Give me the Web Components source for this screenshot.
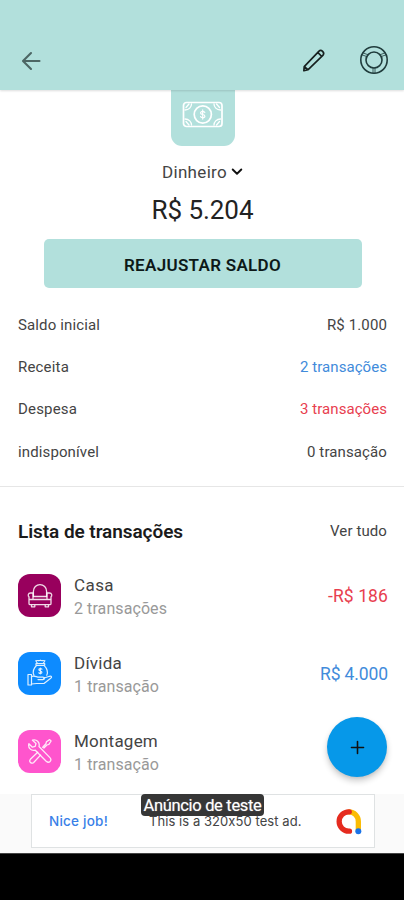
<!DOCTYPE html>
<html lang="pt-BR"><head><meta charset="utf-8"><title>Dinheiro</title>
<style>html,body{margin:0;background:#fff}body{width:404px;height:900px;overflow:hidden;font-family:Roboto,"Liberation Sans",sans-serif;color:#222}</style></head>
<body><account-screen></account-screen>
<script>
function define(name, html, setup) {
  customElements.define(name, class extends HTMLElement {
    connectedCallback() {
      if (this.shadowRoot) return;
      const t = document.createElement('template');
      t.innerHTML = html;
      this.attachShadow({mode:'open'}).append(t.content.cloneNode(true));
      if (setup) setup(this, this.shadowRoot);
    }
  });
}
const icons = {
  back:['0 0 24 24','<path d="M20.5 12H4.3M12 4 4 12l8 8" stroke-width="2.1"/>'],
  pencil:['0 0 26 26','<path d="M2.4 20.2 18.2 3.6c2.6-2.6 7 1.4 4.4 4.4L6.4 23.6 2 24.6zM17 4.8l4.5 4.4M3 20.4l3.2 3" stroke-width="1.8"/>'],
  wheel:['0 0 30 30','<g stroke-width="1.6"><circle cx="15" cy="15" r="13.2"/><circle cx="15" cy="15" r="8"/><path d="M14 23v5M16 23v5M2.9 9.8l5.3 1.9M4.1 7.9l5.2 2M27.1 9.8l-5.3 1.9M25.9 7.9l-5.2 2" stroke-width=".8"/></g>'],
  money:['0 0 42 28','<g stroke-width="1.7"><rect x="1.5" y="1.5" width="38.5" height="24" rx="3"/><circle cx="20.8" cy="13.5" r="8.6"/><path d="M3 9c4 0 6.5-3 6.5-6M3 18c4 0 6.5 3 6.5 6M38.5 9C34.5 9 32 6 32 3M38.5 18C34.5 18 32 21 32 24M4 6.5 7 3M4 20.5 7 24M37.5 6.5l-3-3.5M37.5 20.5l-3 3.5" stroke-width="1.3"/><path d="M22.8 11.5c-.6-.8-1.2-1.1-2.1-1.1-2.9 0-2.8 2.9 0 3.1 2.9.3 2.9 3.2 0 3.2-1 0-1.6-.4-2.1-1.1M20.7 8.9v9.2" stroke-width="1.2"/></g>'],
  sofa:['0 0 26 26','<g stroke-width="1.3"><path d="M6.4 14.5V9.2a6.6 6.6 0 0 1 13.2 0v5.3"/><path d="M6 14.5V11H3.6C.8 11 .8 14 2 14.8v6.7c0 .8.4 1.2 1.2 1.2h19.6c.8 0 1.2-.4 1.2-1.2v-6.7c1.2-.8 1.2-3.8-1.6-3.8H20v3.5zM6 14.5V17.5h14v-3M2 17.5h22M4.5 23v1.8h3.3V23M18.2 23v1.8h3.3V23"/></g>'],
  debt:['0 0 26 26','<g stroke-width="1.2"><path d="M10.5 3.5 8.8.8c2-.9 3 .4 4.6-.6 1.6 1 2.8-.3 4.5.6L16.2 3.5M9 3.5h8.7v1.8H9zM9.7 5.3c-3.6 3.5-4 7.5-2.7 10M17 5.3c3.4 3.4 4.1 7 2.8 10"/><path d="M14.9 9.2c-.9-1-3-.7-3 .6 0 1.6 3 .8 3 2.4 0 1.5-2.2 1.6-3 .6M13.4 8.1v5.7"/><path d="M1 14.5h3.5V25H1zM4.5 16.5c3-1.5 5 .7 7.5.7h3.8c2.3 0 2.2 2.4 0 2.4H11M16.5 18.3l6-2c2.2-.5 2.7 1.1 1.2 2L17 23.5H9.5L4.5 24"/></g>'],
  tools:['0 0 26 26','<g stroke-width="1.3"><path d="M5.5 2.2 9 5.5 8.2 8.4 5.4 9.2 1.9 5.8C.8 9.7 4 13.4 8.3 12.2l10.9 11c2.9 2.6 6.2-.8 3.7-3.6L12 8.5C13.1 4.4 9.5.8 5.5 2.2z"/><path d="m15.7 9.2 3.2-3.4.5-2 3.3-2.2 1.4 1.4-2.2 3.4-2 .6-3 3M10.7 14.3l-7.3 7c-1.9 2.5 1 5 3.3 3.2l6.8-7.4"/></g>'],
  chevron:['0 0 12 8','<path d="m1.7 1.5 4.3 4.2 4.3-4.2" stroke-width="1.9"/>'],
  plus:['0 0 14 14','<path d="M7 .5v13M.5 7h13" stroke-width="1.7"/>'],
  admob:['0 0 28 28','<g stroke-width="5.5" stroke-linecap="round"><path d="M14.5 4A9.8 9.8 0 0 1 24.2 14V23" stroke="#fbbc04"/><path d="M14.8 4h-.5a10 10 0 0 0 0 20h.7" stroke="#e52b1f"/></g><circle cx="24.2" cy="24" r="3.1" fill="#1a73e8" stroke="none"/>']
};
define('line-icon','<style>:host{display:block;flex:none}svg{display:block;width:100%;height:100%;overflow:visible}</style><svg fill="none" stroke="currentColor" stroke-linecap="round" stroke-linejoin="round"></svg>',(h,r)=>{
  const [box,body]=icons[h.getAttribute('name')],s=r.querySelector('svg');
  s.setAttribute('viewBox',box);s.innerHTML=body;
});
/* Single line of text tracked out to the width given in w. */
define('fit-text','<style>:host{display:inline-block;white-space:nowrap;text-align:left}span{display:inline-block}</style><span></span>',(h,r)=>{
  const s=r.querySelector('span'),t=h.getAttribute('text'),w=+h.getAttribute('w');
  s.textContent=t;
  s.style.letterSpacing=((w-s.getBoundingClientRect().width)/t.length).toFixed(3)+'px';
});
define('top-bar',`<style>:host{display:flex;align-items:flex-end;box-sizing:border-box;height:90px;padding:0 15px 15px 19px;background:#b2e0dc;box-shadow:0 1px 2px #0002;position:relative}
.b{width:24px;height:24px;margin-bottom:2px;color:#4d6664}.p{width:24px;height:24px;margin:0 33px 3px auto;color:#17201f}.w{width:30px;height:30px;color:#203c3c}</style>
<line-icon class="b" name="back"></line-icon><line-icon class="p" name="pencil"></line-icon><line-icon class="w" name="wheel"></line-icon>`);
define('account-head',`<style>:host{display:flex;flex-direction:column;align-items:center;height:215px;padding-left:1px}
.t{width:64px;height:56px;border-radius:0 0 11px 11px;background:#b2e0dc;color:#fff;display:flex;justify-content:center}
.t line-icon{width:42px;height:28px;margin-top:11px}
.n{display:flex;align-items:center;gap:4px;height:20px;margin-top:16px;font-size:17px;color:#444}.n line-icon{width:12px;height:8px;color:#111}
.v{height:32px;line-height:32px;margin-top:12px;font-size:26px;color:#222}
.a{box-sizing:border-box;width:318px;height:49px;padding-top:2px;margin-top:13px;border-radius:5px;background:#b2e0dc;display:flex;align-items:center;justify-content:center;font-size:17px;font-weight:600;color:#0d1918}</style>
<div class="t"><line-icon name="money"></line-icon></div><div class="n"><fit-text text="Dinheiro" w="65"></fit-text><line-icon name="chevron"></line-icon></div>
<div class="v"><fit-text text="R$ 5.204" w="102"></fit-text></div><div class="a"><fit-text text="REAJUSTAR SALDO" w="157"></fit-text></div>`);
define('category-row',`<style>:host{display:flex;align-items:center;height:78px;padding:0 16px 0 18px}
.i{width:43px;height:43px;border-radius:12px;background:var(--tile);display:flex;align-items:center;justify-content:center;color:#fffd}.i ::slotted(line-icon){width:26px;height:26px}
.c{display:flex;flex-direction:column;margin:3px auto 0 13px}.c ::slotted(*){height:23px}
::slotted([slot=value]){margin-top:2px}</style>
<div class="i"><slot></slot></div><div class="c"><slot name="name"></slot><slot name="sub"></slot></div><slot name="value"></slot>`);
define('add-button',`<style>:host{position:absolute;left:327px;top:717px;width:60px;height:60px;border-radius:50%;background:#0698e9;box-shadow:0 4px 6px #0003,0 1px 3px #0001;display:flex;align-items:center;justify-content:center;color:#111}line-icon{width:13px;height:13px}</style><line-icon name="plus"></line-icon>`);
define('ad-banner',`<style>:host{display:block;height:59px;background:#fafafa;position:relative}
.x{box-sizing:border-box;width:344px;height:54px;margin-left:31px;border:1px solid #dfe2e3;background:#fff;display:flex;align-items:center;padding:0 12px 0 17px;font-family:Inter,Roboto,sans-serif;font-size:13px;color:#444}
.j{color:#397fe8;font-weight:500;font-size:13.5px;margin-right:41px}.x line-icon{width:27px;height:27px;margin-left:auto}
.g{position:absolute;left:141px;top:0;width:123px;height:22px;border-radius:4px;background:#363636;color:#fff;display:flex;align-items:center;justify-content:center;font-size:16.5px;text-shadow:0 0 1px #fff8}</style>
<div class="x"><fit-text class="j" text="Nice job!" w="59"></fit-text><fit-text text="This is a 320x50 test ad." w="154"></fit-text><line-icon name="admob"></line-icon></div>
<div class="g"><fit-text text="Anúncio de teste" w="118"></fit-text></div>`);
define('summary-line',`<style>:host{display:flex;align-items:center;justify-content:space-between;height:42.2px;padding:0 17px 0 18px;font-size:15px;color:#444}</style><slot></slot>`);
define('account-screen',`<style>:host{display:flex;flex-direction:column;width:404px;height:900px;position:relative;background:#fff}
.s{height:183px;border-bottom:1px solid #e6e6e6;box-sizing:border-box;margin-top:-1px}
.h{display:flex;justify-content:space-between;align-items:center;height:69px;padding:19px 17px 0 18px;box-sizing:border-box;font-size:15px;color:#444}.h .t{font-size:19px;font-weight:600;color:#1b1b1b}
.l{height:238px}.n{font-size:17px;line-height:23px;color:#444}.u{font-size:16px;line-height:23px;color:#999}.v{font-size:17.5px}.r{color:#e8404f}.b{color:#418bdb}
.k{height:47px;background:#000;border-top:1px solid #444;box-sizing:border-box}</style>
<top-bar></top-bar><account-head></account-head><div class="s">
<summary-line><fit-text text="Saldo inicial" w="82"></fit-text><fit-text text="R$ 1.000" w="60"></fit-text></summary-line>
<summary-line><fit-text text="Receita" w="51"></fit-text><fit-text class="b" text="2 transações" w="87"></fit-text></summary-line>
<summary-line><fit-text text="Despesa" w="59"></fit-text><fit-text class="r" text="3 transações" w="87"></fit-text></summary-line>
<summary-line><fit-text text="indisponível" w="81"></fit-text><fit-text text="0 transação" w="80"></fit-text></summary-line></div>
<div class="h"><fit-text class="t" text="Lista de transações" w="165"></fit-text><fit-text text="Ver tudo" w="57"></fit-text></div>
<div class="l">
<category-row style="--tile:#98005d"><line-icon name="sofa"></line-icon><fit-text slot="name" class="n" text="Casa" w="40"></fit-text><fit-text slot="sub" class="u" text="2 transações" w="93"></fit-text><fit-text slot="value" class="v r" text="-R$ 186" w="60"></fit-text></category-row>
<category-row style="--tile:#0d8bff"><line-icon name="debt"></line-icon><fit-text slot="name" class="n" text="Dívida" w="48"></fit-text><fit-text slot="sub" class="u" text="1 transação" w="85"></fit-text><fit-text slot="value" class="v b" text="R$ 4.000" w="68"></fit-text></category-row>
<category-row style="--tile:#ff55cd"><line-icon name="tools"></line-icon><fit-text slot="name" class="n" text="Montagem" w="84"></fit-text><fit-text slot="sub" class="u" text="1 transação" w="85"></fit-text></category-row></div>
<ad-banner></ad-banner><div class="k"></div><add-button></add-button>`);
</script></body></html>
